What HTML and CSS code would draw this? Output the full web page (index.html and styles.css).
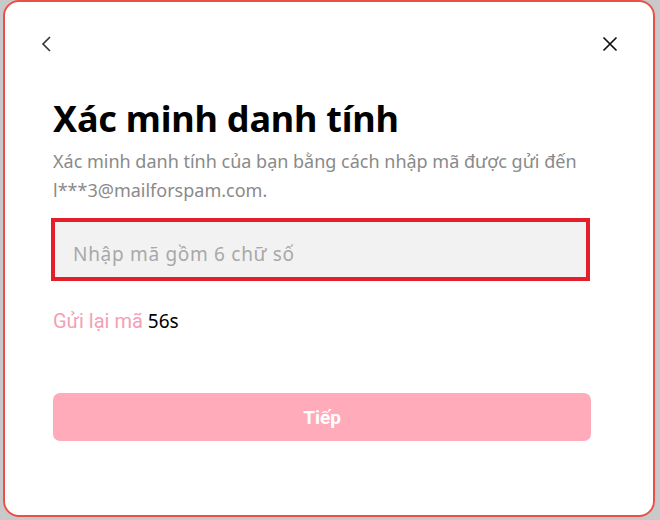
FILE: index.html
```html
<!DOCTYPE html>
<html lang="vi">
<head>
  <meta charset="UTF-8" />
  <meta name="viewport" content="width=device-width, initial-scale=1.0"/>
  <title>Xác minh danh tính</title>
  <link rel="stylesheet" href="styles.css">
</head>
<body>

<div class="modal">
  <div class="modal-header">
    <button class="icon-btn" aria-label="Quay lại">
      <svg width="12" height="18" viewBox="0 0 12 18"><path d="M9 2 L2 9 L9 16" fill="none" stroke="#333" stroke-width="1.6"/></svg>
    </button>
    <button class="icon-btn" aria-label="Đóng">
      <svg width="16" height="16" viewBox="0 0 16 16"><path d="M1.5 1.5 L14.5 14.5 M14.5 1.5 L1.5 14.5" fill="none" stroke="#111" stroke-width="1.7"/></svg>
    </button>
  </div>

  <div class="content">
    <h1 class="title">Xác minh danh tính</h1>
    <p class="desc">Xác minh danh tính của bạn bằng cách nhập mã được gửi đến l***3@mailforspam.com.</p>

    <input class="code-input" type="text" placeholder="Nhập mã gồm 6 chữ số">

    <div class="resend"><span class="resend-link">Gửi lại mã</span> <span class="timer">56s</span></div>

    <button class="next-btn">Tiếp</button>
  </div>
</div>

</body>
</html>
```

FILE: styles.css
```css
* {
  box-sizing: border-box;
}

body {
  margin: 0;
  padding: 0 5px 3px 3px;
  background: #c9c9c9;
  height: 100vh;
  font-family: 'Noto Sans', sans-serif;
  overflow: hidden;
}

.modal {
  background: #fff;
  border: 2px solid #ea5048;
  border-radius: 16px;
  height: 100%;
  padding: 27px 28px 0 27px;
}

.modal-header {
  display: flex;
  justify-content: space-between;
  align-items: center;
  height: 30px;
}

.icon-btn {
  background: none;
  border: none;
  padding: 0;
  width: 30px;
  height: 30px;
  display: flex;
  align-items: center;
  justify-content: center;
  cursor: pointer;
}

.content {
  padding-left: 21px;
  width: 560px;
}

.title {
  margin: 38px 0 0;
  font-size: 36px;
  line-height: 44px;
  font-weight: 700;
  color: #000;
  letter-spacing: -0.2px;
}

.desc {
  margin: 6px 0 0;
  font-size: 18px;
  line-height: 29px;
  color: #8a8a8a;
}

.code-input {
  display: block;
  width: 539px;
  height: 63px;
  margin: 13px 0 0 -2px;
  border: 4px solid #e3202a;
  background: #f2f2f2;
  padding: 8px 18px 0;
  font-family: 'Noto Sans', sans-serif;
  font-size: 19px;
  letter-spacing: 0.7px;
  outline: none;
}

.code-input::placeholder {
  color: #a8a8a8;
}

.resend {
  margin-top: 27px;
  font-size: 19px;
  line-height: 26px;
}

.resend-link {
  font-family: Roboto, sans-serif;
  font-size: 20px;
  color: #f4a0b4;
}

.timer {
  color: #000;
}

.next-btn {
  display: block;
  width: 538px;
  height: 48px;
  margin-top: 59px;
  border: none;
  border-radius: 7px;
  background: #ffabb9;
  color: #fff;
  font-family: Roboto, Arial, sans-serif;
  font-size: 19px;
  font-weight: 700;
  cursor: pointer;
}
```
